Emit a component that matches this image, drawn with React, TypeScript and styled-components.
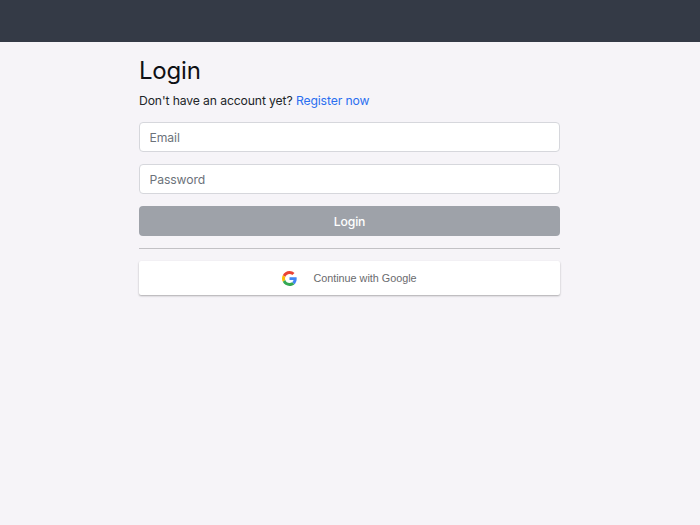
import React from "react";
import styled, { createGlobalStyle } from "styled-components";

const Global = createGlobalStyle`
  html, body { margin: 0; padding: 0; background: #f6f4f8; }
  body { font-family: Inter, "Liberation Sans", sans-serif; color: #14151a; }
  #root { min-height: 525px; }
`;
const Navbar = styled.header`
  height: 42px;
  background: #343a46;
`;
const Main = styled.main`
  width: 421px;
  margin-left: 139px;
  padding-top: 13px;
`;
const Title = styled.h1`
  margin: 0;
  font-size: 24px;
  letter-spacing: -0.2px;
  line-height: 32px;
  font-weight: 400;
  color: #0f1014;
`;
const Lead = styled.p`
  margin: 3px 0 0;
  font-size: 12.2px;
  letter-spacing: -0.12px;
  line-height: 21px;
  color: #212529;
`;
const Link = styled.a`
  color: #2a6ff0;
  text-decoration: none;
`;
const Form = styled.form`
  margin-top: 11px;
  display: flex;
  flex-direction: column;
  gap: 12px;
`;
const Input = styled.input`
  box-sizing: border-box;
  width: 100%;
  height: 30px;
  padding: 0 9.5px;
  background: #fff;
  border: 1px solid #d6d7dc;
  border-radius: 4px;
  letter-spacing: -0.1px;
  font: 400 12.2px Inter, "Liberation Sans", sans-serif;
  &::placeholder { color: #6c727a; opacity: 1; }
`;
const Submit = styled.button`
  height: 30px;
  border: 0;
  border-radius: 4px;
  background: #9ea2a9;
  color: #fff;
  letter-spacing: -0.1px;
  font: 500 12.2px Inter, "Liberation Sans", sans-serif;
`;
const Rule = styled.hr`
  margin: 12px 0;
  border: 0;
  border-top: 1px solid #c2c1c5;
`;
const GoogleButton = styled.button`
  box-sizing: border-box;
  width: 100%;
  height: 34px;
  border: 0;
  border-radius: 2px;
  background: #fff;
  box-shadow: 0 1px 2px rgba(0, 0, 0, 0.3);
  display: flex;
  align-items: center;
  justify-content: center;
  gap: 16px;
  color: #6a6a6e;
  font: 400 10.8px "Liberation Sans", Arial, sans-serif;
`;
const GoogleLabel = styled.span`
  font-size: 10.8px;
`;

const GoogleIcon = () => (
  <svg width="15" height="15" viewBox="0 0 48 48" aria-hidden="true">
    <path fill="#EA4335" d="M24 9.5c3.54 0 6.71 1.22 9.21 3.6l6.85-6.85C35.9 2.38 30.47 0 24 0 14.62 0 6.51 5.38 2.56 13.22l7.98 6.19C12.43 13.72 17.74 9.5 24 9.5z" />
    <path fill="#4285F4" d="M46.98 24.55c0-1.57-.15-3.09-.38-4.55H24v9.02h12.94c-.58 2.96-2.26 5.48-4.78 7.18l7.73 6c4.51-4.18 7.09-10.36 7.09-17.65z" />
    <path fill="#FBBC05" d="M10.53 28.59c-.48-1.45-.76-2.99-.76-4.59s.27-3.14.76-4.59l-7.98-6.19C.92 16.46 0 20.12 0 24c0 3.88.92 7.54 2.56 10.78l7.97-6.19z" />
    <path fill="#34A853" d="M24 48c6.48 0 11.93-2.13 15.89-5.81l-7.73-6c-2.15 1.45-4.92 2.3-8.16 2.3-6.26 0-11.57-4.22-13.47-9.91l-7.98 6.19C6.51 42.62 14.62 48 24 48z" />
  </svg>
);

export default function App() {
  return (
    <>
      <Global />
      <Navbar />
      <Main>
        <Title>Login</Title>
        <Lead>
          Don't have an account yet? <Link href="#">Register now</Link>
        </Lead>
        <Form>
          <Input type="email" placeholder="Email" />
          <Input type="password" placeholder="Password" />
          <Submit type="button">Login</Submit>
        </Form>
        <Rule />
        <GoogleButton type="button">
          <GoogleIcon />
          <GoogleLabel>Continue with Google</GoogleLabel>
        </GoogleButton>
      </Main>
    </>
  );
}
